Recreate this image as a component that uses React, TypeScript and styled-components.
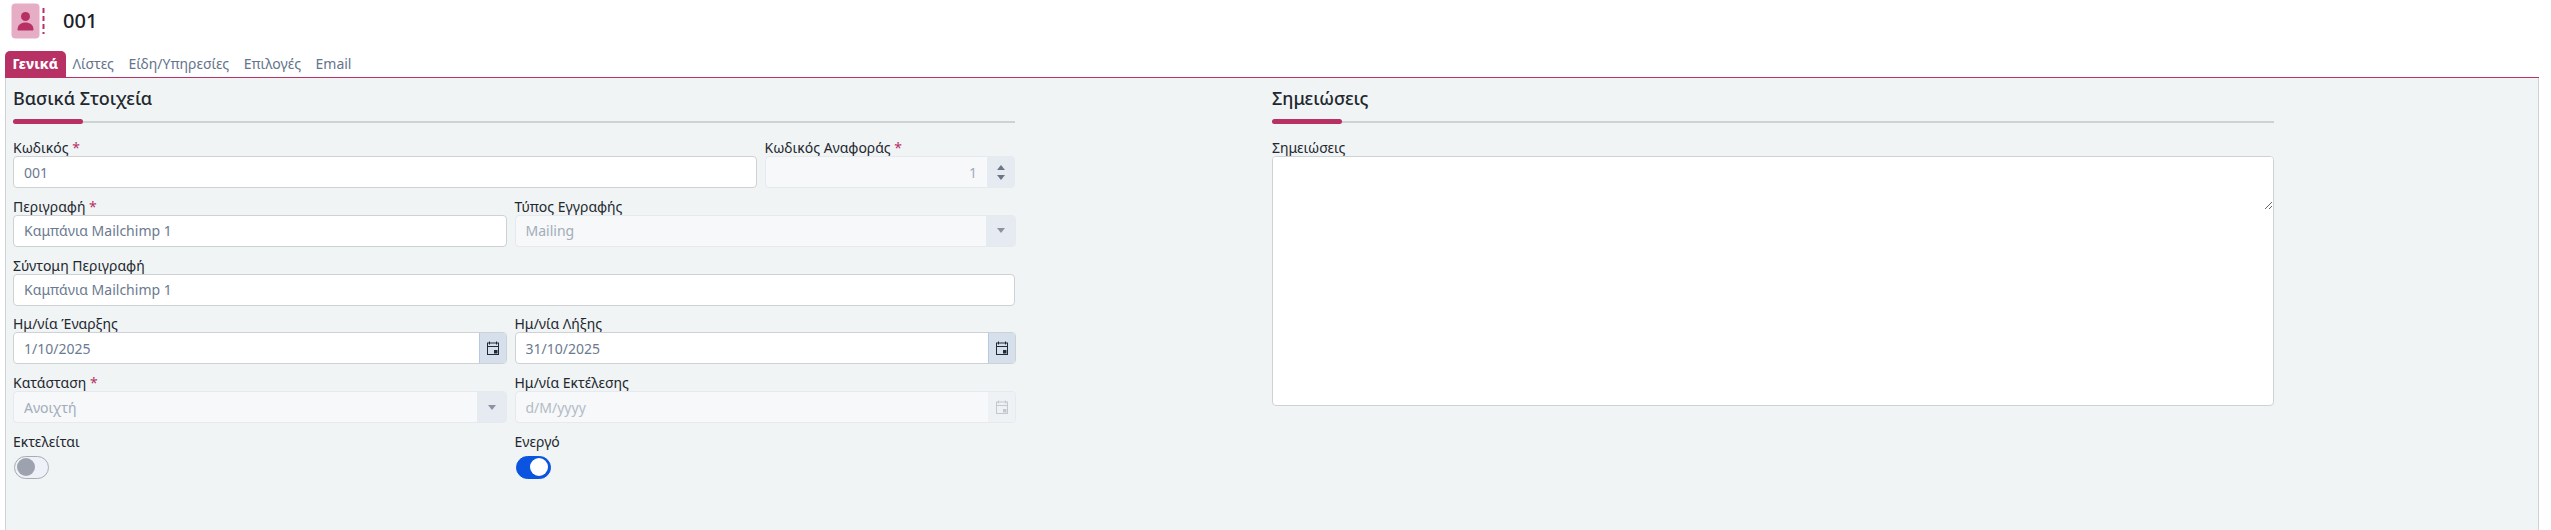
import React from 'react';
import styled, { createGlobalStyle } from 'styled-components';

const GlobalStyle = createGlobalStyle`
  html, body {
    margin: 0;
    padding: 0;
    background: #fff;
    height: 530px;
    overflow: hidden;
  }
  * { box-sizing: border-box; }
`;

const brand = '#b83165';
const font = `"Noto Sans", "Open Sans", sans-serif`;

const Page = styled.div`
  width: 2551px;
  height: 530px;
  display: flex;
  flex-direction: column;
  font-family: ${font};
  color: #23272e;
`;

const Header = styled.div`
  height: 51px;
  flex: none;
  display: flex;
  align-items: flex-start;
  padding: 3px 0 0 11px;
`;

const Title = styled.div`
  margin: 3px 0 0 16px;
  font-size: 20px;
  line-height: 30px;
  font-weight: 500;
  color: #1c2026;
`;

const Tabs = styled.div`
  flex: none;
  height: 27px;
  margin-left: 5px;
  margin-right: 12px;
  display: flex;
  align-items: stretch;
  gap: 14.5px;
  border-bottom: 1px solid ${brand};
`;

const Tab = styled.div<{ $active?: boolean }>`
  font-size: 14px;
  line-height: 26px;
  padding: 0 ${(p) => (p.$active ? '7.5px' : '0')};
  margin-right: ${(p) => (p.$active ? '-7.5px' : '0')};
  border-radius: 5px 5px 0 0;
  background: ${(p) => (p.$active ? brand : 'transparent')};
  color: ${(p) => (p.$active ? '#fff' : '#64748b')};
  font-weight: ${(p) => (p.$active ? 800 : 400)};
`;

const Panel = styled.div`
  flex: 1;
  margin-left: 5px;
  margin-right: 12px;
  background: #f0f4f5;
  border-left: 1px solid #cfd2d4;
  border-right: 1px solid #cfd2d4;
  padding: 0 0 0 7px;
  display: grid;
  grid-template-columns: 1002px 1002px;
  column-gap: 257px;
  align-content: start;
`;

const Section = styled.div`
  display: flex;
  flex-direction: column;
`;

const SectionTitle = styled.div`
  font-size: 18px;
  line-height: 26px;
  font-weight: 500;
  margin-top: 7px;
  color: #23272e;
`;

const SectionRule = styled.div`
  position: relative;
  height: 2px;
  margin: 10px 0 16px;
  background: #cfd2d4;

  &::before {
    content: '';
    position: absolute;
    left: 0;
    top: -2px;
    width: 70px;
    height: 5px;
    border-radius: 3px;
    background: ${brand};
  }
`;

const Row = styled.div<{ $columns: string }>`
  display: grid;
  grid-template-columns: ${(p) => p.$columns};
  column-gap: 7.5px;
  margin-bottom: 9.75px;
`;

const Field = styled.div`
  display: flex;
  flex-direction: column;
  min-width: 0;
`;

const Label = styled.label`
  display: block;
  height: 17px;
  font-size: 14px;
  line-height: 17px;
  white-space: nowrap;
  color: #23272e;
`;

const Star = styled.span`
  color: ${brand};
`;

const Control = styled.div<{ $disabled?: boolean }>`
  height: 32px;
  display: flex;
  align-items: stretch;
  border: 1px solid ${(p) => (p.$disabled ? '#e6e9ee' : '#cfd2d4')};
  border-radius: 4px;
  background: ${(p) => (p.$disabled ? '#f6f8fa' : '#fff')};
  overflow: hidden;
`;

const Input = styled.input<{ $right?: boolean; $muted?: boolean }>`
  flex: 1;
  min-width: 0;
  border: 0;
  outline: 0;
  padding: 0 10px;
  background: transparent;
  font-family: ${font};
  font-size: 14px;
  color: ${(p) => (p.$muted ? '#a3acb9' : '#6b7a90')};
  text-align: ${(p) => (p.$right ? 'right' : 'left')};
  opacity: 1;

  &::placeholder {
    color: #b4bbc5;
    opacity: 1;
  }
`;

const AddOn = styled.div<{ $tone: 'date' | 'dateOff' | 'select' | 'spin'; $width: number }>`
  flex: none;
  width: ${(p) => p.$width}px;
  display: flex;
  flex-direction: column;
  align-items: center;
  justify-content: center;
  gap: 5px;
  background: ${(p) =>
    p.$tone === 'date' ? '#d6e0ec' : p.$tone === 'dateOff' ? '#eff2f5' : '#e6eaf1'};
  border-left: 1px solid ${(p) => (p.$tone === 'date' ? '#b5c9e4' : 'transparent')};
`;

const Arrow = styled.span<{ $up?: boolean; $color: string }>`
  width: 0;
  height: 0;
  border-left: 4px solid transparent;
  border-right: 4px solid transparent;
  ${(p) =>
    p.$up
      ? `border-bottom: 5px solid ${p.$color};`
      : `border-top: 5px solid ${p.$color};`}
`;

const NoteBox = styled.div`
  height: 250px;
  border: 1px solid #cfd2d4;
  border-radius: 4px;
  background: #fff;
  overflow: hidden;
`;

const NoteArea = styled.textarea`
  display: block;
  width: 100%;
  height: 53px;
  border: 0;
  outline: 0;
  padding: 8px 11px;
  background: #fff;
  font-family: ${font};
  font-size: 14px;
  resize: both;
`;

const Switch = styled.div<{ $on?: boolean }>`
  width: 35px;
  height: 23px;
  margin: 6px 0 0 1px;
  border-radius: 12px;
  display: flex;
  align-items: center;
  padding: 0 2px;
  justify-content: ${(p) => (p.$on ? 'flex-end' : 'flex-start')};
  background: ${(p) => (p.$on ? '#0b54e0' : '#eef1f8')};
  border: 1px solid ${(p) => (p.$on ? '#0b54e0' : '#a9acb2')};

  &::after {
    content: '';
    width: 18px;
    height: 18px;
    border-radius: 50%;
    background: ${(p) => (p.$on ? '#fff' : '#9ca3af')};
  }
`;

const CalendarIcon = ({ color }: { color: string }) => (
  <svg width="14" height="15" viewBox="0 0 14 15" fill="none">
    <path d="M3.5 0.5v3M10.5 0.5v3" stroke={color} strokeWidth="1" />
    <rect x="1.5" y="2" width="11" height="11.5" stroke={color} strokeWidth="1" fill="none" />
    <path d="M1.5 5.5h11" stroke={color} strokeWidth="1" />
    <rect x="8" y="9" width="3.5" height="3.5" fill={color} />
  </svg>
);

const ContactIcon = () => (
  <svg width="36" height="36" viewBox="0 0 36 36">
    <rect x="0.5" y="0.5" width="28" height="35" rx="4" fill="#e6aec4" />
    <circle cx="14.5" cy="13.5" r="4.5" fill={brand} />
    <path d="M6.5 26.5c0-4.6 3.6-7 8-7s8 2.4 8 7c0 .6-.4 1-1 1H7.5c-.6 0-1-.4-1-1z" fill={brand} />
    <path d="M32.5 5v26" stroke={brand} strokeWidth="2" strokeDasharray="5 3" />
  </svg>
);

const DateField = ({ label, value }: { label: string; value: string }) => (
  <Field>
    <Label>{label}</Label>
    <Control>
      <Input readOnly value={value} />
      <AddOn $tone="date" $width={27}>
        <CalendarIcon color="#1f2937" />
      </AddOn>
    </Control>
  </Field>
);

const SelectField = ({ label, value, required }: { label: string; value: string; required?: boolean }) => (
  <Field>
    <Label>
      {label}
      {required && <Star> *</Star>}
    </Label>
    <Control $disabled>
      <Input readOnly $muted value={value} />
      <AddOn $tone="select" $width={29}>
        <Arrow $color="#8b93a0" />
      </AddOn>
    </Control>
  </Field>
);

const TextField = ({ label, value, required }: { label: string; value: string; required?: boolean }) => (
  <Field>
    <Label>
      {label}
      {required && <Star> *</Star>}
    </Label>
    <Control>
      <Input readOnly value={value} />
    </Control>
  </Field>
);

const HALF = '494px 501px';

const App = () => (
  <Page>
    <GlobalStyle />
    <Header>
      <ContactIcon />
      <Title>001</Title>
    </Header>
    <Tabs>
      <Tab $active>Γενικά</Tab>
      <Tab>Λίστες</Tab>
      <Tab>Είδη/Υπηρεσίες</Tab>
      <Tab>Επιλογές</Tab>
      <Tab>Email</Tab>
    </Tabs>
    <Panel>
      <Section>
        <SectionTitle>Βασικά Στοιχεία</SectionTitle>
        <SectionRule />
        <Row $columns="744px 250.5px">
          <TextField label="Κωδικός" value="001" required />
          <Field>
            <Label>
              Κωδικός Αναφοράς<Star> *</Star>
            </Label>
            <Control $disabled>
              <Input readOnly $right $muted value="1" />
              <AddOn $tone="spin" $width={27}>
                <Arrow $up $color="#6b7686" />
                <Arrow $color="#6b7686" />
              </AddOn>
            </Control>
          </Field>
        </Row>
        <Row $columns={HALF}>
          <TextField label="Περιγραφή" value="Καμπάνια Mailchimp 1" required />
          <SelectField label="Τύπος Εγγραφής" value="Mailing" />
        </Row>
        <Row $columns="1fr">
          <TextField label="Σύντομη Περιγραφή" value="Καμπάνια Mailchimp 1" />
        </Row>
        <Row $columns={HALF}>
          <DateField label="Ημ/νία Έναρξης" value="1/10/2025" />
          <DateField label="Ημ/νία Λήξης" value="31/10/2025" />
        </Row>
        <Row $columns={HALF}>
          <SelectField label="Κατάσταση" value="Ανοιχτή" required />
          <Field>
            <Label>Ημ/νία Εκτέλεσης</Label>
            <Control $disabled>
              <Input readOnly placeholder="d/M/yyyy" />
              <AddOn $tone="dateOff" $width={27}>
                <CalendarIcon color="#c3c8cf" />
              </AddOn>
            </Control>
          </Field>
        </Row>
        <Row $columns={HALF}>
          <Field>
            <Label>Εκτελείται</Label>
            <Switch />
          </Field>
          <Field>
            <Label>Ενεργό</Label>
            <Switch $on />
          </Field>
        </Row>
      </Section>
      <Section>
        <SectionTitle>Σημειώσεις</SectionTitle>
        <SectionRule />
        <Field>
          <Label>Σημειώσεις</Label>
          <NoteBox>
            <NoteArea readOnly />
          </NoteBox>
        </Field>
      </Section>
    </Panel>
  </Page>
);

export default App;
